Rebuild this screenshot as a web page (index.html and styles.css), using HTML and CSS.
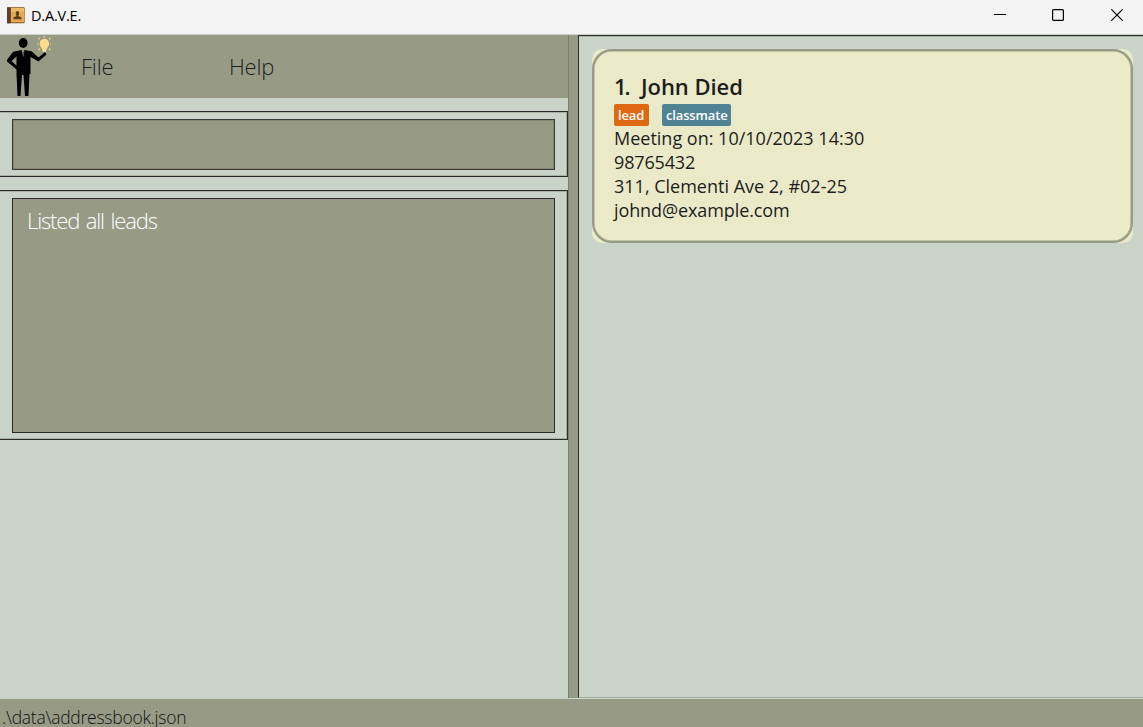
FILE: index.html
```html
<!DOCTYPE html>
<html lang="en">
<head>
<meta charset="utf-8">
<title>D.A.V.E.</title>
<link rel="stylesheet" href="styles.css">
</head>
<body>
<div class="window">
  <header class="titlebar">
    <svg class="app-icon" width="18" height="17" viewBox="0 0 18 17">
      <rect x="0" y="0.3" width="17.6" height="16" rx="1" fill="#80501f"/>
      <rect x="0" y="0.3" width="3.4" height="16" fill="#5b4031"/>
      <rect x="4" y="1" width="13" height="14.3" fill="#e3a953"/>
      <rect x="4" y="1" width="13" height="4" fill="#edb968"/>
      <path d="M10.500 4C8.800 4 8.500 6 9 7.300Q9.500 8.300 9.400 9.200L6.500 10.200V12.200H14.500V10.200L11.600 9.200Q11.500 8.300 12 7.300C12.500 6 12.200 4 10.500 4Z" fill="#5b3b18"/>
    </svg>
    <span class="title">D.A.V.E.</span>
    <div class="controls">
      <svg width="12" height="12" viewBox="0 0 12 12"><path d="M0 5.500H12" stroke="#000"/></svg>
      <svg width="12" height="12" viewBox="0 0 12 12"><rect x=".6" y=".6" width="10.8" height="10.8" rx="1" fill="none" stroke="#000" stroke-width="1.2"/></svg>
      <svg width="12" height="12" viewBox="0 0 12 12"><path d="M.3 .3L11.700 11.700M11.700 .3L.3 11.700" stroke="#000" stroke-width="1.2"/></svg>
    </div>
  </header>
  <main class="split">
    <section class="left">
      <nav class="menu">
        <svg class="logo" width="46" height="62" viewBox="0 0 46 62">
          <ellipse cx="18.2" cy="8" rx="4.4" ry="5"/>
          <path d="M12 16L16.500 15L18 20L19.500 15L25 16Q27 16 28.500 18L33.500 22.500L40 17L41.500 19.500L33.500 26.500L25.500 22V39H24.500L23.500 61H20L18.500 40H17L15.500 61H12.500L11.500 39V34.500L2 26.500V25L7 18Q8.500 16 12 16ZM11.500 21.500L6.500 26L11.500 30.500Z"/>
          <path d="M17.500 16.500H19.200L19 21L18.400 22L17.700 21Z" fill="#55584c"/>
          <path d="M39.500 4C36.300 4 34.500 6.300 34.700 9C34.900 11.500 36.800 12.500 37.300 14.500L38 17H40.500L41.500 14.500C42 12.500 43.900 11.500 44 9C44.200 6.300 42.500 4 39.500 4Z" fill="#ffdc89"/>
          <path d="M39.300 1V2.500M33.500 3L34.700 4.200M45.500 3L44.200 4.200M32 9H33.500M45 9H46M33.500 15L34.700 13.700M45.500 15L44.200 13.700" stroke="#ffdc89" stroke-width="1.200"/>
        </svg>
        <span class="menu-item file">File</span>
        <span class="menu-item help">Help</span>
      </nav>
      <div class="pane command"><div class="box"></div></div>
      <div class="pane result"><div class="box"><span class="message">Listed all leads</span></div></div>
    </section>
    <div class="divider"></div>
    <section class="right">
      <article class="card">
        <div class="card-body">
          <h1 class="name"><span class="index">1.</span><span class="person">John Died</span></h1>
          <div class="tags"><span class="tag lead">lead</span><span class="tag classmate">classmate</span></div>
          <p class="line"><span class="meeting">Meeting on: 10/10/2023 14:30</span></p>
          <p class="line"><span class="phone">98765432</span></p>
          <p class="line"><span class="address">311, Clementi Ave 2, #02-25</span></p>
          <p class="line"><span class="email">johnd@example.com</span></p>
        </div>
      </article>
    </section>
  </main>
  <footer class="status"><span class="path">.\data\addressbook.json</span></footer>
</div>
</body>
</html>
```
FILE: styles.css
```css
* { box-sizing: border-box; }
body { margin: 0; font-family: "Open Sans", "Noto Sans", sans-serif; color: #1d1d1d; }
span { white-space: nowrap; }
svg { display: block; flex: none; }
.window { width: 1143px; height: 727px; display: flex; flex-direction: column; background: #c9d3c8; }
.titlebar { height: 34px; flex: none; background: #f3f3f3; display: flex; align-items: flex-start; padding: 7px 20px 0 7px; }
.title { font-size: 14.5px; line-height: 18px; margin-left: 6px; letter-spacing: -0.2px; color: #000; }
.controls { margin-left: auto; display: flex; gap: 47px; padding: 2px 0 0; }
.controls svg:first-child { margin-right: -1px; }
.split { height: 664px; flex: none; display: flex; padding-top: 1px; }
.left { width: 568px; display: flex; flex-direction: column; }
.menu { height: 63px; background: #979b86; display: flex; padding-left: 5px; margin-bottom: 13px; }
.menu-item { font-weight: 300; font-size: 22px; line-height: 30px; padding-top: 16px; letter-spacing: -0.2px; }
.file { margin-left: 30px; width: 148px; }
.pane { border: 1px solid #2b2b2b; border-left: 0; padding: 7px 12px 6px; box-shadow: inset 0 1px #a8b0a6, inset -1px -1px #a8b0a6; }
.command { height: 66px; margin-bottom: 13px; }
.result { height: 250px; }
.box { height: 100%; background: #979b86; border: 1px solid #2b2b2b; padding: 7px 14px; }
.command .box { border-color: #383838; box-shadow: inset 0 0 0 1px #83876f; }
.message { display: block; font-weight: 300; font-size: 22px; line-height: 28px; letter-spacing: -1.15px; word-spacing: 2px; color: #fff; }
.divider { width: 10px; background: #979b86; border-left: 1px solid #7b7e6c; }
.right { flex: 1; height: 663px; border-left: 1px solid #2b2b2b; border-top: 1px solid #2b2b2b; box-shadow: inset 0 1px #a8b0a6; padding: 13px 10px 0 13px; border-bottom: 1px solid #a5ada3; }
.card { height: 194px; background: #eaeac8; border-radius: 10px; }
.card-body { height: 100%; border: 2px solid #979b86; box-shadow: inset 0 0 0 0.5px #979b86; border-radius: 20px; padding: 21px 20px; }
.name { margin: 0; height: 32px; line-height: 29px; font-size: 22px; font-weight: 600; letter-spacing: -0.05px; display: flex; }
.index { width: 27px; letter-spacing: -2px; }
.tags { display: flex; gap: 13px; height: 22px; }
.tag { height: 22px; line-height: 22px; padding: 0 4px; border-radius: 2px; color: #fff; font-size: 13px; font-weight: 600; letter-spacing: -0.15px; }
.lead { width: 35px; background: #df6813; }
.classmate { width: 69px; background: #508394; }
.line { margin: 0; height: 24px; line-height: 24px; font-size: 18px; }
.phone { letter-spacing: -0.15px; }
.email { letter-spacing: -0.1px; }
.status { flex: 1; background: #979b86; padding: 8px 2px 0; margin-top: 1px; }
.path { display: block; font-size: 17.5px; line-height: 20px; font-weight: 300; letter-spacing: -0.25px; color: #111; }
```
